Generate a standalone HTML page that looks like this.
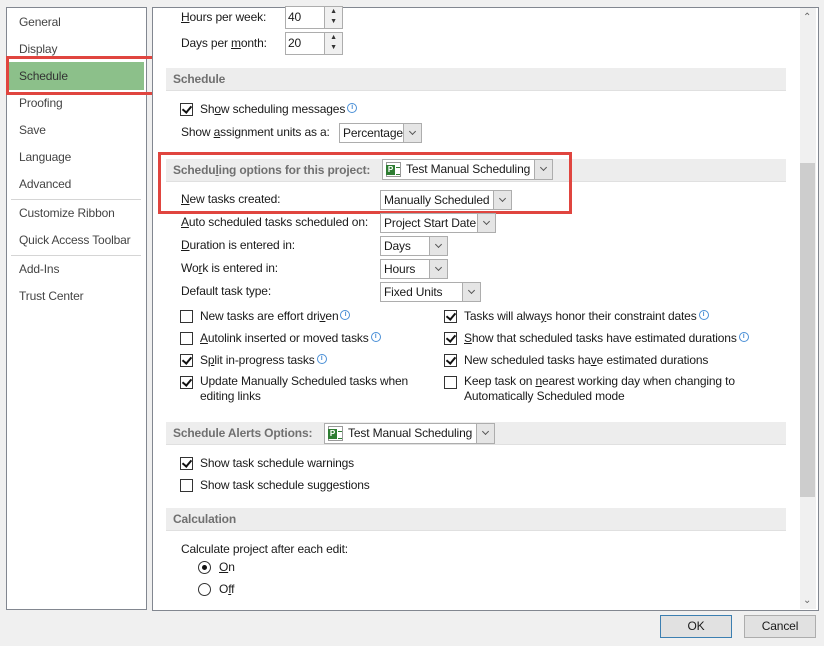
<!DOCTYPE html>
<html><head><meta charset="utf-8"><style>
*{box-sizing:border-box;margin:0;padding:0}
body{width:824px;height:646px;background:#f0f0f0;font-family:"Liberation Sans",sans-serif;font-size:12px;color:#1a1a1a;position:relative;overflow:hidden;letter-spacing:-0.15px}
.a{position:absolute;white-space:nowrap;line-height:16px}
.box{position:absolute;background:#fff;border:1px solid #adadad}
.panel{position:absolute;background:#fff;border:1px solid #828790}
.hdr{position:absolute;left:166px;width:620px;height:23px;background:#ededed;border-bottom:1px solid #e0e0e0}
.hdr span{position:absolute;left:7px;top:4px;font-weight:bold;color:#707070;line-height:16px}
.cb{position:absolute;width:13px;height:13px;border:1px solid #333;background:#fff}
.cb.on::after{content:"";position:absolute;left:3px;top:0px;width:4px;height:7px;border:solid #111;border-width:0 2px 2px 0;transform:rotate(40deg)}
.dd{position:absolute;background:#fff;border:1px solid #adadad;height:20px}
.dd .t{position:absolute;left:3px;top:1px;line-height:16px;white-space:nowrap}
.dd .ar{position:absolute;right:0;top:0;width:18px;height:18px;background:#e5e5e5;border-left:1px solid #adadad}
.dd .ar::after{content:"";position:absolute;left:6px;top:5px;width:4px;height:4px;border:solid #555;border-width:0 1.5px 1.5px 0;transform:rotate(45deg)}
.info{display:inline-block;width:10px;height:10px;border:1px solid #4a8fd6;border-radius:50%;font-size:7px;line-height:8px;text-align:center;color:#4a8fd6;vertical-align:4px;margin-left:2px;font-weight:bold}
.pj{position:absolute;left:3px;top:2px;width:15px;height:15px;border:1px solid #999;background:#fff}
.pj::before{content:"P";position:absolute;left:-1px;top:2px;width:9px;height:10px;background:#2e7d32;color:#fff;font-size:8px;line-height:10px;text-align:center;font-weight:bold}
.pj::after{content:"";position:absolute;left:9px;top:4px;width:4px;height:6px;border-top:1px solid #2e7d32;border-bottom:1px solid #2e7d32}
.red{position:absolute;border:3px solid #e0453f}
.rad{position:absolute;width:13px;height:13px;border:1px solid #333;border-radius:50%;background:#fff}
.btn{position:absolute;top:615px;width:72px;height:23px;background:#e1e1e1;border:1px solid #adadad;text-align:center;line-height:21px}
.sp{position:absolute;left:38px;top:0;width:18px;border-left:1px solid #adadad;background:#f0f0f0;font-size:7px;text-align:center;color:#333}
u{text-decoration:underline}
</style></head><body>
<div class="panel" style="left:6px;top:7px;width:141px;height:603px"></div>
<div class="a" style="left:8px;top:62px;width:136px;height:28px;background:#8cc08a;position:absolute"></div>
<div class="a" style="left:19px;top:14px;color:#444">General</div>
<div class="a" style="left:19px;top:41px;color:#444">Display</div>
<div class="a" style="left:19px;top:68px;color:#333">Schedule</div>
<div class="a" style="left:19px;top:95px;color:#444">Proofing</div>
<div class="a" style="left:19px;top:122px;color:#444">Save</div>
<div class="a" style="left:19px;top:149px;color:#444">Language</div>
<div class="a" style="left:19px;top:176px;color:#444">Advanced</div>
<div class="a" style="left:11px;top:199px;width:130px;height:1px;background:#d5d5d5"></div>
<div class="a" style="left:19px;top:205px;color:#444">Customize Ribbon</div>
<div class="a" style="left:19px;top:232px;color:#444">Quick Access Toolbar</div>
<div class="a" style="left:11px;top:255px;width:130px;height:1px;background:#d5d5d5"></div>
<div class="a" style="left:19px;top:261px;color:#444">Add-Ins</div>
<div class="a" style="left:19px;top:288px;color:#444">Trust Center</div>
<div class="red" style="left:6px;top:56px;width:158px;height:39px"></div>

<div class="panel" style="left:152px;top:7px;width:667px;height:604px"></div>
<div class="a" style="left:800px;top:8px;width:16px;height:601px;background:#f0f0f0"></div>
<div class="a" style="left:800px;top:163px;width:15px;height:334px;background:#cdcdcd"></div>
<div class="a" style="left:803px;top:10px;color:#666;font-size:10px">&#8963;</div>
<div class="a" style="left:803px;top:593px;color:#666;font-size:10px">&#8964;</div>

<div class="a" style="left:181px;top:9px"><u>H</u>ours per week:</div>
<div class="box" style="left:285px;top:6px;width:58px;height:23px"><span class="a" style="left:2px;top:2px">40</span><span class="sp" style="height:21px;line-height:10px">▲<br>▼</span></div>
<div class="a" style="left:181px;top:35px">Days per <u>m</u>onth:</div>
<div class="box" style="left:285px;top:32px;width:58px;height:23px"><span class="a" style="left:2px;top:2px">20</span><span class="sp" style="height:21px;line-height:10px">▲<br>▼</span></div>

<div class="hdr" style="top:68px"><span style="top:3px">Schedule</span></div>
<div class="cb on" style="left:180px;top:103px"></div>
<div class="a" style="left:200px;top:101px">Sh<u>o</u>w scheduling messages<span class="info">i</span></div>
<div class="a" style="left:181px;top:124px">Show <u>a</u>ssignment units as a:</div>
<div class="dd" style="left:339px;top:123px;width:83px"><span class="t">Percentage</span><span class="ar"></span></div>

<div class="hdr" style="top:159px"><span style="top:3px">Schedu<u>l</u>ing options for this project:</span></div>
<div class="dd" style="left:382px;top:159px;width:171px;height:21px"><span class="pj"></span><span class="t" style="left:23px">Test Manual Scheduling</span><span class="ar" style="height:19px"></span></div>
<div class="a" style="left:181px;top:191px"><u>N</u>ew tasks created:</div>
<div class="dd" style="left:380px;top:190px;width:132px"><span class="t">Manually Scheduled</span><span class="ar"></span></div>
<div class="red" style="left:158px;top:152px;width:414px;height:62px"></div>
<div class="a" style="left:181px;top:214px"><u>A</u>uto scheduled tasks scheduled on:</div>
<div class="dd" style="left:380px;top:213px;width:116px"><span class="t">Project Start Date</span><span class="ar"></span></div>
<div class="a" style="left:181px;top:237px"><u>D</u>uration is entered in:</div>
<div class="dd" style="left:380px;top:236px;width:68px"><span class="t">Days</span><span class="ar"></span></div>
<div class="a" style="left:181px;top:260px">Wo<u>r</u>k is entered in:</div>
<div class="dd" style="left:380px;top:259px;width:68px"><span class="t">Hours</span><span class="ar"></span></div>
<div class="a" style="left:181px;top:283px">Default task type:</div>
<div class="dd" style="left:380px;top:282px;width:101px"><span class="t">Fixed Units</span><span class="ar"></span></div>

<div class="cb" style="left:180px;top:310px"></div>
<div class="a" style="left:200px;top:308px">New tasks are effort dri<u>v</u>en<span class="info">i</span></div>
<div class="cb" style="left:180px;top:332px"></div>
<div class="a" style="left:200px;top:330px"><u>A</u>utolink inserted or moved tasks<span class="info">i</span></div>
<div class="cb on" style="left:180px;top:354px"></div>
<div class="a" style="left:200px;top:352px">S<u>p</u>lit in-progress tasks<span class="info">i</span></div>
<div class="cb on" style="left:180px;top:376px"></div>
<div class="a" style="left:200px;top:374px;line-height:15px">Update Manually Scheduled tasks when<br>editin<u>g</u> links</div>

<div class="cb on" style="left:444px;top:310px"></div>
<div class="a" style="left:464px;top:308px">Tasks will alwa<u>y</u>s honor their constraint dates<span class="info">i</span></div>
<div class="cb on" style="left:444px;top:332px"></div>
<div class="a" style="left:464px;top:330px"><u>S</u>how that scheduled tasks have estimated durations<span class="info">i</span></div>
<div class="cb on" style="left:444px;top:354px"></div>
<div class="a" style="left:464px;top:352px">New scheduled tasks ha<u>v</u>e estimated durations</div>
<div class="cb" style="left:444px;top:376px"></div>
<div class="a" style="left:464px;top:374px;line-height:15px">Keep task on <u>n</u>earest working day when changing to<br>Automatically Scheduled mode</div>

<div class="hdr" style="top:422px"><span style="top:3px">Schedule Alerts Options:</span></div>
<div class="dd" style="left:324px;top:423px;width:171px;height:21px"><span class="pj"></span><span class="t" style="left:23px">Test Manual Scheduling</span><span class="ar" style="height:19px"></span></div>
<div class="cb on" style="left:180px;top:457px"></div>
<div class="a" style="left:200px;top:455px">Show task schedule warnings</div>
<div class="cb" style="left:180px;top:479px"></div>
<div class="a" style="left:200px;top:477px">Show task schedule suggestions</div>

<div class="hdr" style="top:508px"><span style="top:3px">Calculation</span></div>
<div class="a" style="left:181px;top:541px">Calculate project after each edit:</div>
<div class="rad" style="left:198px;top:561px"><span style="position:absolute;left:3px;top:3px;width:5px;height:5px;border-radius:50%;background:#111"></span></div>
<div class="a" style="left:219px;top:559px"><u>O</u>n</div>
<div class="rad" style="left:198px;top:583px"></div>
<div class="a" style="left:219px;top:581px">O<u>f</u>f</div>

<div class="btn" style="left:660px;border:1px solid #3c7fb1">OK</div>
<div class="btn" style="left:744px">Cancel</div>
</body></html>
